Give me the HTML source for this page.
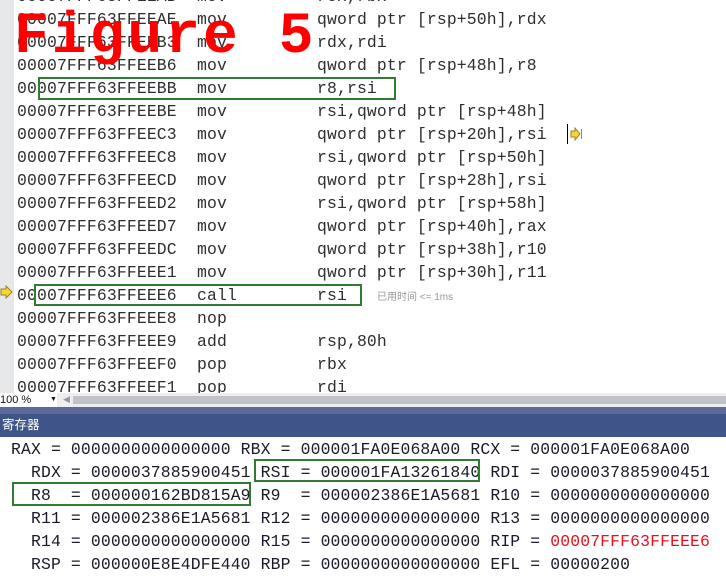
<!DOCTYPE html>
<html><head><meta charset="utf-8"><style>
*{margin:0;padding:0;box-sizing:border-box}
body{width:726px;height:585px;overflow:hidden;background:#fff;position:relative;font-family:"Liberation Mono",monospace}
.gut{position:absolute;left:0;top:0;width:14px;height:393px;background:#e6e7e8}
.code{position:absolute;left:17px;top:0;}
.row{position:absolute;height:23px;line-height:23px;font-size:16.4px;color:#2e2e2e;white-space:pre;letter-spacing:0.15px}
.m{position:absolute;left:180px}
.o{position:absolute;left:300px}
.box{position:absolute;border:2.5px solid #2f7d32}
.fig{position:absolute;left:14px;top:10px;font-family:"Liberation Mono",monospace;font-weight:bold;font-size:58px;color:#f00;line-height:56px;white-space:pre;letter-spacing:3px}
.bar{position:absolute;left:0;top:393px;width:726px;height:14px;background:#eeeef2}
.dd{position:absolute;left:0;top:0;width:57px;height:14px;background:#fff;font-family:"Liberation Sans",sans-serif;font-size:11px;line-height:14px;color:#111}
.track{position:absolute;left:73px;top:3px;width:653px;height:8px;background:#c2c3c9}
.b1{position:absolute;left:0;top:407px;width:726px;height:7px;background:#5b6a98}
.hd{position:absolute;left:0;top:414px;width:726px;height:23px;background:#3f5489;color:#fff;font-family:"Liberation Sans","Noto Sans CJK SC",sans-serif;font-size:12.5px;line-height:23px;padding-left:2px}
.reg{position:absolute;left:11px;font-size:16.4px;line-height:23px;color:#1a1a2a;white-space:pre;letter-spacing:0.15px}
.red{color:#e8101a}
</style></head><body>
<div class="gut"></div>
<div class="code">
<div class="row" style="top:-15px">00007FFF63FFEEAB<span class="m">mov</span><span class="o">rcx,rbx</span></div>
<div class="row" style="top:8px">00007FFF63FFEEAE<span class="m">mov</span><span class="o">qword ptr [rsp+50h],rdx</span></div>
<div class="row" style="top:31px">00007FFF63FFEEB3<span class="m">mov</span><span class="o">rdx,rdi</span></div>
<div class="row" style="top:54px">00007FFF63FFEEB6<span class="m">mov</span><span class="o">qword ptr [rsp+48h],r8</span></div>
<div class="row" style="top:77px">00007FFF63FFEEBB<span class="m">mov</span><span class="o">r8,rsi</span></div>
<div class="row" style="top:100px">00007FFF63FFEEBE<span class="m">mov</span><span class="o">rsi,qword ptr [rsp+48h]</span></div>
<div class="row" style="top:123px">00007FFF63FFEEC3<span class="m">mov</span><span class="o">qword ptr [rsp+20h],rsi</span></div>
<div class="row" style="top:146px">00007FFF63FFEEC8<span class="m">mov</span><span class="o">rsi,qword ptr [rsp+50h]</span></div>
<div class="row" style="top:169px">00007FFF63FFEECD<span class="m">mov</span><span class="o">qword ptr [rsp+28h],rsi</span></div>
<div class="row" style="top:192px">00007FFF63FFEED2<span class="m">mov</span><span class="o">rsi,qword ptr [rsp+58h]</span></div>
<div class="row" style="top:215px">00007FFF63FFEED7<span class="m">mov</span><span class="o">qword ptr [rsp+40h],rax</span></div>
<div class="row" style="top:238px">00007FFF63FFEEDC<span class="m">mov</span><span class="o">qword ptr [rsp+38h],r10</span></div>
<div class="row" style="top:261px">00007FFF63FFEEE1<span class="m">mov</span><span class="o">qword ptr [rsp+30h],r11</span></div>
<div class="row" style="top:284px">00007FFF63FFEEE6<span class="m">call</span><span class="o">rsi</span></div>
<div class="row" style="top:307px">00007FFF63FFEEE8<span class="m">nop</span></div>
<div class="row" style="top:330px">00007FFF63FFEEE9<span class="m">add</span><span class="o">rsp,80h</span></div>
<div class="row" style="top:353px">00007FFF63FFEEF0<span class="m">pop</span><span class="o">rbx</span></div>
<div class="row" style="top:376px">00007FFF63FFEEF1<span class="m">pop</span><span class="o">rdi</span></div>
</div>
<div style="position:absolute;left:377px;top:288px;font-family:'Liberation Sans','Noto Sans CJK SC',sans-serif;font-size:10px;color:#999">已用时间 &lt;= 1ms</div>
<div style="position:absolute;left:567px;top:124px;width:1px;height:20px;background:#000"></div>
<svg style="position:absolute;left:570px;top:127px" width="12" height="14"><path d="M1 4h4V1l5 6-5 6V10H1z" fill="#f5d63a" stroke="#a08020" stroke-width="1"/><rect x="11" y="2" width="1" height="10" fill="#888"/></svg>
<svg style="position:absolute;left:0px;top:285px" width="14" height="14"><path d="M1 4h5V1l6 6-6 6V10H1z" fill="#f5d63a" stroke="#a08020" stroke-width="1"/></svg>
<div class="box" style="left:38px;top:77px;width:358px;height:23px"></div>
<div class="box" style="left:34px;top:284px;width:328px;height:22px"></div>
<div class="fig">Figure 5</div>
<div class="bar"><div class="dd">100 % <span style="position:absolute;left:50px;font-size:7px">▼</span></div><div style="position:absolute;left:63px;top:2px;font-size:9px;color:#999;font-family:'DejaVu Sans'">◀</div><div class="track"></div></div>
<div class="b1"></div>
<div class="hd">寄存器</div>
<div class="reg" style="top:438px">RAX = 0000000000000000 RBX = 000001FA0E068A00 RCX = 000001FA0E068A00</div>
<div class="reg" style="top:461px">  RDX = 0000037885900451 RSI = 000001FA13261840 RDI = 0000037885900451</div>
<div class="reg" style="top:484px">  R8  = 000000162BD815A9 R9  = 000002386E1A5681 R10 = 0000000000000000</div>
<div class="reg" style="top:507px">  R11 = 000002386E1A5681 R12 = 0000000000000000 R13 = 0000000000000000</div>
<div class="reg" style="top:530px">  R14 = 0000000000000000 R15 = 0000000000000000 RIP = <span class="red">00007FFF63FFEEE6</span></div>
<div class="reg" style="top:553px">  RSP = 000000E8E4DFE440 RBP = 0000000000000000 EFL = 00000200</div>
<div class="box" style="left:254px;top:459px;width:226px;height:23px"></div>
<div class="box" style="left:12px;top:482px;width:239px;height:24px"></div>
</body></html>
